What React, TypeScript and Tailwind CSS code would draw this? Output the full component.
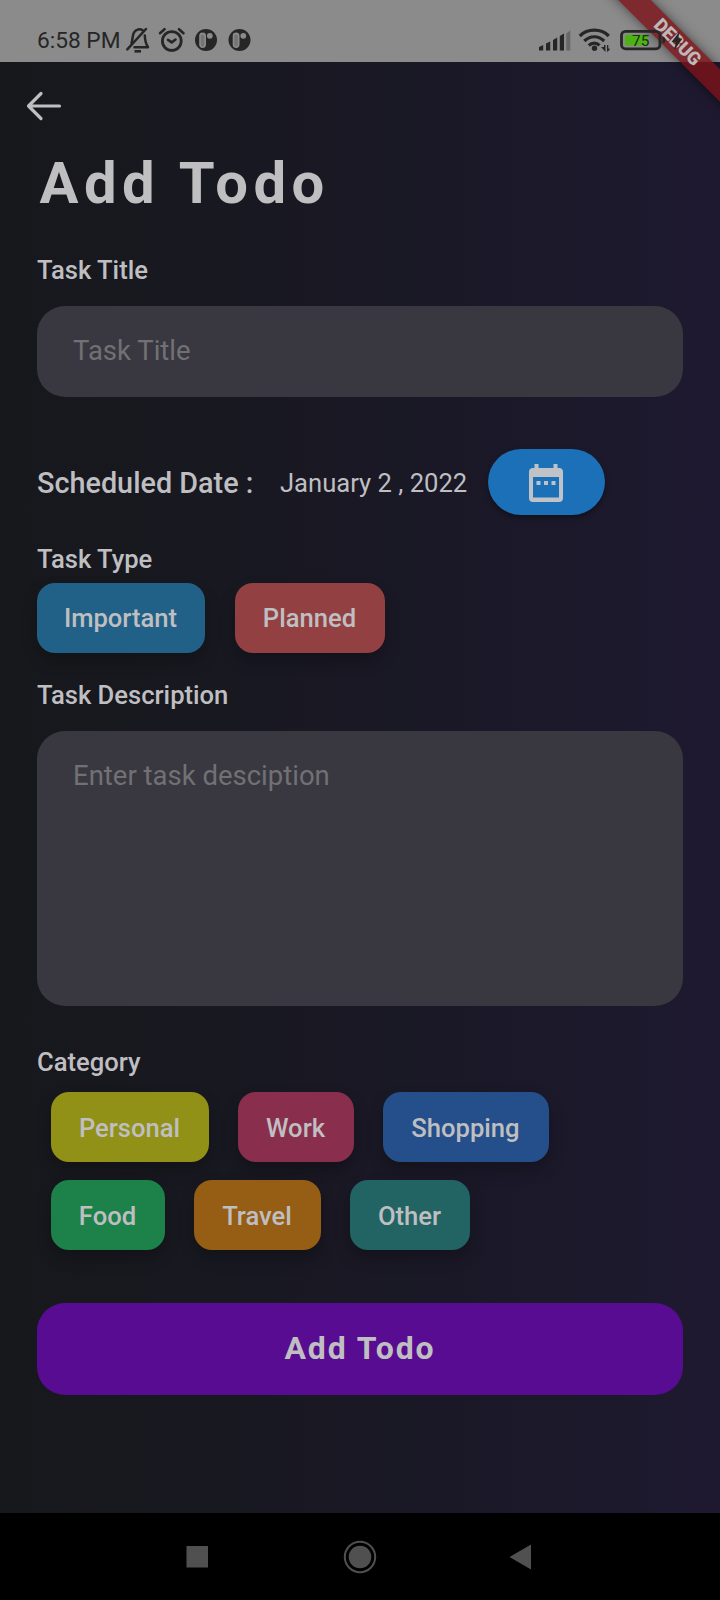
import React from "react";

function StatusIcons() {
  return (
    <svg width="130" height="30" viewBox="124 24 130 30" fill="none" stroke="#262626" strokeWidth="2.500" strokeLinecap="round">
      {/* muted bell */}
      <path d="M131.500 43C133 40 132 35.500 134 32.500C136 29 140 28.500 143 30.500" />
      <path d="M144.800 35.500C145 41 145.500 43.500 148 47.300H134.500" strokeLinejoin="round" />
      <path d="M127.300 49.300L146 29" />
      <path d="M134.500 51.300H141" strokeWidth="2.600" strokeLinecap="butt" />
      {/* alarm */}
      <circle cx="171.800" cy="41" r="9.400" strokeWidth="2.800" />
      <path d="M168 39.800L171.800 42.300L175.500 39.500" strokeWidth="2.600" />
      <path d="M160 33.200L164.500 29.200M183.500 33.200L179 29.200" strokeWidth="2.600" />
      {/* app badges */}
      {[206, 239.500].map((x) => (
        <g key={x} stroke="none">
          <circle cx={x} cy="40" r="11" fill="#262626" />
          <rect x={x - 6.800} y="32.500" width="6.800" height="15.500" rx="3.400" fill="#8b8b8b" />
          <rect x={x - 5.200} y="34.500" width="3.600" height="12" rx="1.800" fill="#757575" />
          <circle cx={x + 3.800} cy="35.800" r="2.900" fill="#8b8b8b" />
        </g>
      ))}
    </svg>
  );
}

function SystemIcons() {
  return (
    <svg width="150" height="34" viewBox="537 22 150 34" fill="#262626">
      {/* signal bars */}
      <path d="M539 50.500v-3.500l4.200-2v5.500zM546 50.500v-7l4.200-2v9zM553 50.500v-10.500l4.200-2.500v13zM559.800 50.500v-14.500l4.200-2.500v17z" />
      <path d="M566.300 50.500V33.500l4-3v20z" fill="#686868" />
      {/* wifi */}
      <g fill="none" stroke="#262626" strokeWidth="3.200">
        <path d="M579.800 36C587.500 28.300 601 28.300 608.800 36" />
        <path d="M584.300 41C590 35.300 598.500 35.300 604.200 41" />
        <path d="M588.800 45.500C592 42.300 596.500 42.300 599.500 45.300" />
      </g>
      <circle cx="594.500" cy="48.300" r="2.700" />
      <path d="M601 47h3v-2h1.500v7zM609.500 48.500v1.500l-2.500 2v-7h1.300v3.500z" />
      {/* battery */}
      <rect x="621.500" y="31.300" width="38.500" height="17.500" rx="4" fill="none" stroke="#262626" strokeWidth="2.800" />
      <rect x="625" y="34.800" width="23" height="10.800" rx="1" fill="#4db313" />
      <path d="M662.500 36.500q3 0.500 3 3.500t-3 3.500z" />
      <text x="632" y="46" fontFamily="Roboto, sans-serif" fontSize="15.500" fill="#1b3010">75</text>
      <path d="M680 31L671.500 42H676L674 50.500L682.500 38.500H678z" />
    </svg>
  );
}

function Label({ children, className = "" }: { children: React.ReactNode; className?: string }) {
  return <div className={`h-[30px] text-[25.600px] leading-[30px] font-medium whitespace-nowrap ${className}`}>{children}</div>;
}

function Chip({ children, className }: { children: React.ReactNode; className: string }) {
  return (
    <button className={`h-[70px] shrink-0 rounded-[18px] pr-px text-center text-[25.600px] leading-[70px] font-medium shadow-[0_8px_16px_rgba(0,0,0,0.24)] ${className}`}>
      {children}
    </button>
  );
}

export default function App() {
  return (
    <div className="relative flex h-[1600px] w-[720px] flex-col overflow-hidden bg-black font-[Roboto,sans-serif] text-[#bfbfc1]">
      <header className="flex h-[62px] items-center justify-between bg-[#8b8b8b] pt-[16px] pr-[33px] pl-[37px] text-[#262626]">
        <div className="flex items-center">
          <span className="w-[87px] pt-[3px] text-[22.700px] leading-[30px] whitespace-nowrap">6:58 PM</span>
          <StatusIcons />
        </div>
        <div className="relative z-10">
          <SystemIcons />
        </div>
      </header>

      <main className="flex h-[1451px] flex-col bg-linear-to-r from-[#17181c] via-[#191824] to-[#1e1930] pr-[37px] pl-[37px]">
        <svg className="mt-[29px] -ml-[11px] shrink-0" width="36" height="30" viewBox="0 0 36 30" fill="none" stroke="#bfbfc1" strokeWidth="3.200" strokeLinecap="round" strokeLinejoin="round">
          <path d="M33.500 15H2.500M15 2.500L2.500 15L15 27.500" />
        </svg>
        <h1 className="mt-[28px] h-[68px] pl-[2.500px] text-[58px] leading-[68px] font-bold tracking-[5.500px]">Add Todo</h1>

        <Label className="mt-[38px]">Task Title</Label>
        <div className="mt-[21px] h-[91px] shrink-0 rounded-[28px] bg-[#393840] pt-[29px] pl-[36px] text-[27.500px] leading-[32px] text-[#717175]">Task Title</div>

        <div className="mt-[52px] flex h-[66px] shrink-0 items-center">
          <span className="w-[243px] pt-[2px] text-[28.800px] leading-[32px] font-medium whitespace-nowrap">Scheduled Date :</span>
          <span className="w-[207.500px] pt-px text-[25.600px] leading-[32px] whitespace-nowrap">January 2 , 2022</span>
          <button className="flex h-[66px] w-[117px] items-center justify-center rounded-full bg-[#1b70b7] shadow-[0_3px_5px_rgba(0,0,0,0.35)]">
            <svg className="mr-px mt-px" width="34" height="38" viewBox="0 0 34 38" fill="#bfc3c8">
              <path fillRule="evenodd" d="M5.500 0h4v4h15V0h4v4h1.500a4 4 0 0 1 4 4v26a4 4 0 0 1-4 4H4a4 4 0 0 1-4-4V8a4 4 0 0 1 4-4h1.500zM4 13v20.500h26V13z" />
              <path d="M7.500 17h4v4h-4zM15 17h4v4h-4zM22.500 17h4v4h-4z" />
            </svg>
          </button>
        </div>

        <Label className="mt-[29px]">Task Type</Label>
        <div className="mt-[9px] flex gap-[30px]">
          <Chip className="w-[168px] bg-[#216187]">Important</Chip>
          <Chip className="w-[150px] bg-[#934043]">Planned</Chip>
        </div>

        <Label className="mt-[27px]">Task Description</Label>
        <div className="mt-[21px] h-[275px] shrink-0 rounded-[28px] bg-[#393840] pt-[29px] pl-[36px] text-[27.500px] leading-[32px] text-[#717175]">Enter task desciption</div>

        <Label className="mt-[41px]">Category</Label>
        <div className="mt-[15px] flex gap-[29px] pl-[14px]">
          <Chip className="w-[158px] bg-[#919017] pt-px">Personal</Chip>
          <Chip className="w-[116px] bg-[#8a2e4d] pt-px">Work</Chip>
          <Chip className="w-[166px] bg-[#254f8a] pt-px">Shopping</Chip>
        </div>
        <div className="mt-[18px] flex gap-[29px] pl-[14px]">
          <Chip className="w-[114px] bg-[#1d824a] pt-px">Food</Chip>
          <Chip className="w-[127px] bg-[#965d14] pt-px">Travel</Chip>
          <Chip className="w-[120px] bg-[#226463] pt-px">Other</Chip>
        </div>

        <button className="mt-[53px] h-[92px] shrink-0 rounded-[28px] bg-[#580c92] pb-[2px] text-center text-[32px] leading-[90px] font-bold tracking-[1.900px]">Add Todo</button>
      </main>

      <nav className="flex h-[87px] items-center pl-[186px]">
        <svg width="345" height="34" viewBox="0 0 345 34" fill="#505050">
          <path d="M0.500 6h21.500v21.500H0.500z" />
          <circle cx="174" cy="17" r="11.300" />
          <circle cx="174" cy="17" r="15.200" fill="none" stroke="#505050" strokeWidth="2" />
          <path d="M323.500 17L345 4.500v25z" />
        </svg>
      </nav>

      <div className="absolute top-[31px] left-[577px] h-[23px] w-[200px] rotate-45 bg-[rgba(122,19,25,0.82)] text-center text-[18.500px] leading-[23px] font-black tracking-[-0.300px] text-[#bfb6b8] shadow-[0_0_12px_rgba(0,0,0,0.5)]">DEBUG</div>
    </div>
  );
}
